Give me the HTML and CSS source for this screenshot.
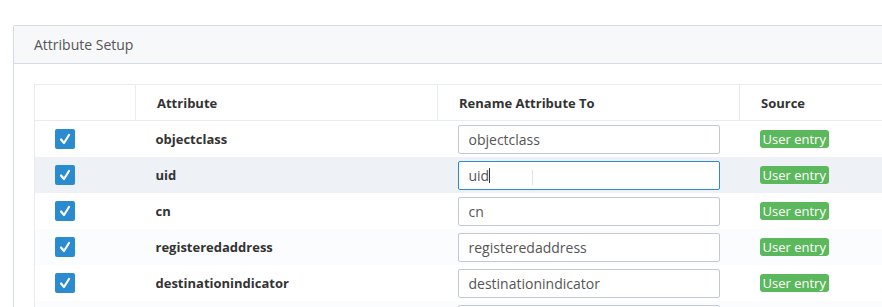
FILE: index.html
```html
<!DOCTYPE html>
<html lang="en">
<head>
    <meta charset="UTF-8">
    <title>Attribute Setup</title>
    <link rel="stylesheet" href="styles.css">
</head>
<body>
    <!-- Attribute setup panel -->
    <div class="panel">
        <div class="panel-heading">Attribute Setup</div>
        <div class="panel-body">
            <table class="attr-table">
                <colgroup>
                    <col class="col-check">
                    <col class="col-wide">
                    <col class="col-wide">
                    <col class="col-wide">
                </colgroup>
                <thead>
                    <tr>
                        <th></th>
                        <th>Attribute</th>
                        <th>Rename Attribute To</th>
                        <th>Source</th>
                    </tr>
                </thead>
                <tbody>
                    <tr>
                        <td><span class="check"><svg viewBox="0 0 20 20"><polyline points="6,10.5 9,14 14,6"/></svg></span></td>
                        <td class="attr-name">objectclass</td>
                        <td><input class="form-control" type="text" value="objectclass"></td>
                        <td><span class="badge">User entry</span></td>
                    </tr>
                    <tr class="hover">
                        <td><span class="check"><svg viewBox="0 0 20 20"><polyline points="6,10.5 9,14 14,6"/></svg></span></td>
                        <td class="attr-name">uid</td>
                        <td>
                            <div class="input-wrap">
                                <input class="form-control focused" type="text" value="uid">
                                <span class="caret"></span>
                                <span class="ibeam"></span>
                            </div>
                        </td>
                        <td><span class="badge">User entry</span></td>
                    </tr>
                    <tr>
                        <td><span class="check"><svg viewBox="0 0 20 20"><polyline points="6,10.5 9,14 14,6"/></svg></span></td>
                        <td class="attr-name">cn</td>
                        <td><input class="form-control" type="text" value="cn"></td>
                        <td><span class="badge">User entry</span></td>
                    </tr>
                    <tr class="striped">
                        <td><span class="check"><svg viewBox="0 0 20 20"><polyline points="6,10.5 9,14 14,6"/></svg></span></td>
                        <td class="attr-name">registeredaddress</td>
                        <td><input class="form-control" type="text" value="registeredaddress"></td>
                        <td><span class="badge">User entry</span></td>
                    </tr>
                    <tr>
                        <td><span class="check"><svg viewBox="0 0 20 20"><polyline points="6,10.5 9,14 14,6"/></svg></span></td>
                        <td class="attr-name">destinationindicator</td>
                        <td><input class="form-control" type="text" value="destinationindicator"></td>
                        <td><span class="badge">User entry</span></td>
                    </tr>
                    <!-- next row, only its top edge is in view -->
                    <tr class="striped">
                        <td></td>
                        <td></td>
                        <td><input class="form-control" type="text" value=""></td>
                        <td></td>
                    </tr>
                </tbody>
            </table>
        </div>
    </div>
</body>
</html>
```

FILE: styles.css
```css
body {
    font-family: "Open Sans", Arial, sans-serif;
    margin: 0;
    padding: 25px 0 0 13px;
    background: #fff;
    color: #333;
    overflow: hidden;
}

.panel {
    width: 1050px;
    border: 1px solid #d3dbe6;
    border-radius: 2px;
    background: #fff;
}

.panel-heading {
    height: 37px;
    line-height: 37px;
    padding: 0 20px;
    background: #f7f8fa;
    border-bottom: 1px solid #d3dbe6;
    font-size: 14px;
    color: #555;
}

.panel-body {
    padding: 20px;
}

.attr-table {
    width: 1008px;
    table-layout: fixed;
    border-collapse: collapse;
    border: 1px solid #e7ecf1;
    font-size: 13px;
}

.col-check {
    width: 101px;
}

.attr-table th {
    height: 35px;
    padding: 0 21px;
    text-align: left;
    font-weight: 700;
    color: #333;
    border-right: 1px solid #e7ecf1;
    border-bottom: 1px solid #e7ecf1;
}

.attr-table td {
    height: 36px;
    padding: 0 20px;
    vertical-align: middle;
}

.attr-table tr.hover td {
    background: #eef1f5;
}

.attr-table tr.striped td {
    background: #fbfcfd;
}

.attr-name {
    font-weight: 700;
}

.check {
    display: block;
    width: 20px;
    height: 20px;
    border-radius: 2px;
    background: #2a8bd0;
}

.check svg {
    width: 20px;
    height: 20px;
    display: block;
}

.check polyline {
    fill: none;
    stroke: #fff;
    stroke-width: 2.2;
    stroke-linecap: round;
    stroke-linejoin: round;
}

.form-control {
    box-sizing: border-box;
    display: block;
    width: 262px;
    height: 29px;
    margin: 0;
    padding: 0 10px;
    border: 1px solid #c2cad8;
    border-radius: 2px;
    background: #fff;
    font-family: "Open Sans", Arial, sans-serif;
    font-size: 14px;
    color: #555;
    outline: none;
}

.form-control.focused {
    border-color: #2a8bd0;
}

.input-wrap {
    position: relative;
    width: 262px;
}

/* text caret + mouse pointer shown over the focused field */
.caret {
    position: absolute;
    left: 31px;
    top: 7px;
    width: 1px;
    height: 15px;
    background: #333;
}

.ibeam {
    position: absolute;
    left: 74px;
    top: 9px;
    width: 1px;
    height: 15px;
    background: #e2e2e2;
}

.badge {
    display: inline-block;
    padding: 0 3px;
    height: 18px;
    line-height: 18px;
    border-radius: 3px;
    background: #5cb85c;
    color: #fff;
    font-size: 13px;
}
```
